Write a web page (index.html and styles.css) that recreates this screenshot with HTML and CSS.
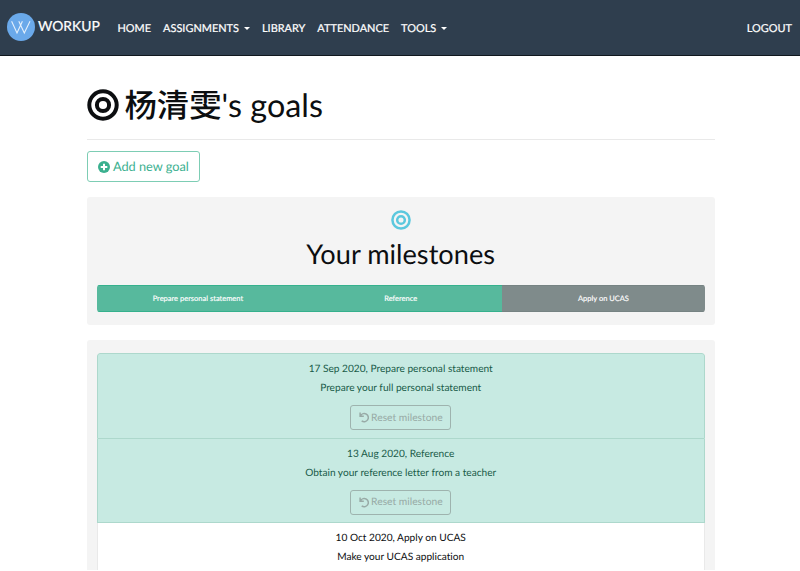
FILE: index.html
```html
<!DOCTYPE html>
<html lang="en">
<head>
<meta charset="utf-8">
<title>Workup</title>
<link rel="stylesheet" href="styles.css">
</head>
<body>
<div class="page">
  <nav class="navbar">
    <a class="brand">
      <svg class="logo" viewBox="0 0 28 28"><circle cx="14" cy="14" r="14" fill="#6aa9ea"/><path d="M4.6 8.2L10 20L15.4 8.2M11.8 8.2L17.3 20L23 8.2" fill="none" stroke="#e4f0fc" stroke-width="1.1"/></svg>
      <span class="brand-name">WORKUP</span>
    </a>
    <a class="link">HOME</a>
    <a class="link">ASSIGNMENTS<i class="caret"></i></a>
    <a class="link">LIBRARY</a>
    <a class="link">ATTENDANCE</a>
    <a class="link">TOOLS<i class="caret"></i></a>
    <a class="link logout">LOGOUT</a>
  </nav>
  <main class="container">
    <h1 class="title">
      <svg class="title-icon" viewBox="0 0 32 32"><g fill="none" stroke="currentColor" stroke-width="4"><circle cx="16" cy="16" r="13.7"/><circle cx="16" cy="16" r="6.1"/></g></svg>
      <span><span class="name">杨清雯</span>'s goals</span>
    </h1>
    <a class="add">
      <svg class="add-icon" viewBox="0 0 12 12"><circle cx="6" cy="6" r="6" fill="currentColor"/><path d="M6 2.7v6.6M2.7 6h6.6" stroke="#fff" stroke-width="2"/></svg>
      <span>Add new goal</span>
    </a>
    <section class="card summary">
      <svg class="summary-icon" viewBox="0 0 32 32"><g fill="none" stroke="currentColor" stroke-width="4"><circle cx="16" cy="16" r="13.7"/><circle cx="16" cy="16" r="6.1"/></g></svg>
      <h2 class="heading">Your milestones</h2>
      <div class="progress">
        <div class="step done">Prepare personal statement</div>
        <div class="step done">Reference</div>
        <div class="step">Apply on UCAS</div>
      </div>
    </section>
    <section class="card list-card">
      <ul class="list">
        <li class="item complete">
          <p>17 Sep 2020, Prepare personal statement</p>
          <p>Prepare your full personal statement</p>
          <a class="reset"><svg class="undo" viewBox="0 0 11 11"><path d="M1.1 .5V4.2H4.8M1.6 3.7A4.1 4.1 0 1 1 2.7 8.8" fill="none" stroke="currentColor" stroke-width="1.5"/></svg><span>Reset milestone</span></a>
        </li>
        <li class="item complete">
          <p>13 Aug 2020, Reference</p>
          <p>Obtain your reference letter from a teacher</p>
          <a class="reset"><svg class="undo" viewBox="0 0 11 11"><path d="M1.1 .5V4.2H4.8M1.6 3.7A4.1 4.1 0 1 1 2.7 8.8" fill="none" stroke="currentColor" stroke-width="1.5"/></svg><span>Reset milestone</span></a>
        </li>
        <li class="item">
          <p>10 Oct 2020, Apply on UCAS</p>
          <p>Make your UCAS application</p>
        </li>
      </ul>
    </section>
  </main>
</div>
</body>
</html>
```
FILE: styles.css
```css
* { box-sizing: border-box; }
html, body { margin: 0; background: #fff; overflow: hidden; }
body { font-family: Lato, "Noto Sans CJK SC", sans-serif; color: #0c0e10; text-rendering: geometricPrecision; font-variant-ligatures: none; }
h1, h2, p, ul { margin: 0; padding: 0; font-weight: 400; }
.page { height: 570px; overflow: hidden; }
.navbar {
  display: flex; align-items: center; height: 56px; padding: 0 8px 1px 7px;
  background: #2f3e4e; border-bottom: 1px solid #10171e; color: #fff;
}
.brand { display: flex; align-items: center; width: 110.5px; }
.logo { width: 28px; height: 28px; margin-right: 3px; }
.brand-name { font-size: 13.9px; line-height: 18px; margin-top: -2px; -webkit-text-stroke: .2px; }
.link { display: flex; align-items: center; font-size: 10.95px; line-height: 16px; white-space: nowrap; -webkit-text-stroke: .2px; margin-right: 12px; margin-top: 3px; }
.caret { margin-left: 5px; border: 3.2px solid transparent; border-top-color: #fff; border-bottom: 0; }
.logout { margin-left: auto; margin-right: 0; }
.container { width: 628.4px; margin-left: 86.5px; }
.title {
  display: flex; align-items: center; height: 84px; padding-top: 14px;
  border-bottom: 1px solid #e9e9e9; font-size: 32.35px; line-height: 40px;
}
.title-icon { width: 32px; height: 32px; margin-right: 6px; }
.name { font-weight: 500; }
.add {
  display: flex; align-items: center; justify-content: center; width: 113.8px; height: 31px;
  margin-top: 11px; border: 1px solid #7dcdb4; border-radius: 3px; color: #3bb08f; font-size: 12.75px;
}
.add span { margin-top: -1px; }
.add-icon { width: 12px; height: 12px; margin-right: 3px; }
.card { background: #f4f4f4; border-radius: 3px; padding: 0 10px; }
.summary { display: flex; flex-direction: column; align-items: center; height: 128px; margin-top: 15px; padding-top: 13px; }
.summary-icon { width: 20px; height: 20px; color: #5bc8de; }
.heading { font-size: 27.2px; line-height: 32px; margin-top: 8px; }
.progress { display: flex; width: 100%; height: 27px; margin-top: 15px; border-radius: 3px; overflow: hidden; }
.step {
  flex: 1; display: flex; align-items: center; justify-content: center; background: #7f8b8b;
  border: 1px solid #768383; border-width: 1px 0; color: #fff; font-size: 7.5px; -webkit-text-stroke: .15px;
}
.step.done { background: #57b99d; border-color: #35b18d; }
.list-card { height: 300px; margin-top: 15px; padding-top: 13px; }
.list { list-style: none; border-radius: 3px 3px 0 0; overflow: hidden; }
.item { display: flex; flex-direction: column; align-items: center; height: 120px; padding-top: 6px; background: #fff; border: 1px solid #e9e9e9; border-width: 0 1px; font-size: 10.15px; }
.item p { line-height: 19px; }
.complete { height: 84.5px; background: #c7eae2; color: #195b49; border-color: #add8cc; border-bottom-width: 1px; }
.complete:first-child { height: 85.5px; border-top-width: 1px; border-radius: 3px 3px 0 0; }
.reset {
  display: flex; align-items: center; justify-content: center; width: 101px; height: 25px; margin-top: 7px;
  border: 1px solid #9eb3ae; border-radius: 3px; color: #98aaa6; font-size: 10.3px;
}
.undo { width: 11px; height: 11px; margin-right: 1.5px; }
```
